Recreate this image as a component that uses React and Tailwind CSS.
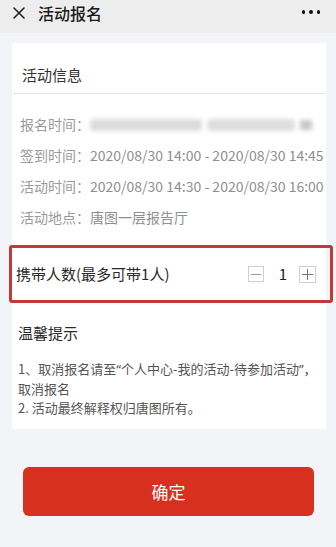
import React from "react";

export default function App() {
  const font = { fontFamily: '"Noto Sans CJK SC", "Noto Sans", sans-serif' };
  const latin = { fontFamily: '"Noto Sans", sans-serif' };
  return (
    <div className="w-[336px] h-[547px] overflow-hidden bg-[#f3f4f7] flex flex-col" style={font}>
      <div className="h-[33px] shrink-0 bg-[#ededed] flex items-start pl-[13px] pr-[16px] pt-[1px]">
        <div className="h-[24px] w-full flex items-center">
          <svg width="12" height="12" viewBox="0 0 12 12" className="shrink-0">
            <path d="M1 1L11 11M11 1L1 11" stroke="#222" strokeWidth="1.6" strokeLinecap="round" />
          </svg>
          <div className="ml-[13px] text-[16px] font-medium text-[#1a1a1a] leading-none">活动报名</div>
          <div className="ml-auto flex items-center gap-[4px] mt-[-2px]">
            <span className="w-[3.5px] h-[3.5px] rounded-full bg-[#111]" />
            <span className="w-[3.5px] h-[3.5px] rounded-full bg-[#111]" />
            <span className="w-[3.5px] h-[3.5px] rounded-full bg-[#111]" />
          </div>
        </div>
      </div>

      <div className="pt-[10px] pl-[12px] pr-[10px]">
        <div className="bg-white flex flex-col">
          <div className="h-[51px] pt-[23px] pl-[9px] border-b border-[#e4e4e4] mx-[1px]">
            <span className="block text-[15px] leading-[17px] text-[#333]">活动信息</span>
          </div>
          <div className="pt-[15px] pl-[8px] flex flex-col text-[14px] text-[#9a9a9a]">
            <div className="h-[31px] flex items-center">
              <span className="shrink-0">报名时间：</span>
              <div className="flex items-center gap-[5px] blur-[2px]">
                <div className="w-[112px] h-[12px] bg-[#dcdcdc] rounded-sm" />
                <div className="w-[88px] h-[12px] bg-[#dedede] rounded-sm" />
                <div className="w-[12px] h-[10px] bg-[#c8c8c8]" />
              </div>
            </div>
            <div className="h-[31px] flex items-center whitespace-nowrap">
              <span className="shrink-0">签到时间：</span>
              <span className="text-[#8f8f8f]">2020/08/30 14:00 - 2020/08/30 14:45</span>
            </div>
            <div className="h-[31px] flex items-center whitespace-nowrap">
              <span className="shrink-0">活动时间：</span>
              <span className="text-[#8f8f8f]">2020/08/30 14:30 - 2020/08/30 16:00</span>
            </div>
            <div className="h-[31px] flex items-center">
              <span className="shrink-0">活动地点：</span>
              <span className="text-[#8f8f8f]">唐图一层报告厅</span>
            </div>
          </div>

          <div className="mt-[12px] -ml-[3px] -mr-[7px] h-[58px] border-[3px] border-[#bf3a3a] rounded-[3px] flex items-center pl-[4px] pr-[14px]">
            <span className="text-[15px] text-[#2a2a2a]">携带人数(最多可带1人)</span>
            <div className="ml-auto flex items-center">
              <div className="w-[16px] h-[16px] border border-[#cfcfcf] flex items-center justify-center">
                <div className="w-[10px] h-[1px] bg-[#999]" />
              </div>
              <span className="ml-[15px] mr-[12px] text-[15px] text-[#222]">1</span>
              <div className="w-[17px] h-[17px] border border-[#cfcfcf] relative flex items-center justify-center">
                <div className="w-[11px] h-[1px] bg-[#777]" />
                <div className="absolute w-[1px] h-[11px] bg-[#777]" />
              </div>
            </div>
          </div>

          <div className="pl-[6px] pr-[4px] pt-[20px] pb-[12px]">
            <div className="text-[15px] text-[#2a2a2a] leading-[20px]">温馨提示</div>
            <div className="mt-[16px] text-[13px] text-[#555] leading-[19px]">
              <div className="whitespace-nowrap">
                1、取消报名请至<span style={latin}>“</span>个人中心-我的活动-待参加活动<span style={latin}>”</span>，
              </div>
              <div>取消报名</div>
              <div>2. 活动最终解释权归唐图所有。</div>
            </div>
          </div>
        </div>
      </div>

      <div className="mt-[38px] px-[23px] pr-[22px]">
        <button className="w-full h-[49px] rounded-[6px] bg-[#d8301f] text-white text-[17px] flex items-center justify-center">
          确定
        </button>
      </div>
    </div>
  );
}
